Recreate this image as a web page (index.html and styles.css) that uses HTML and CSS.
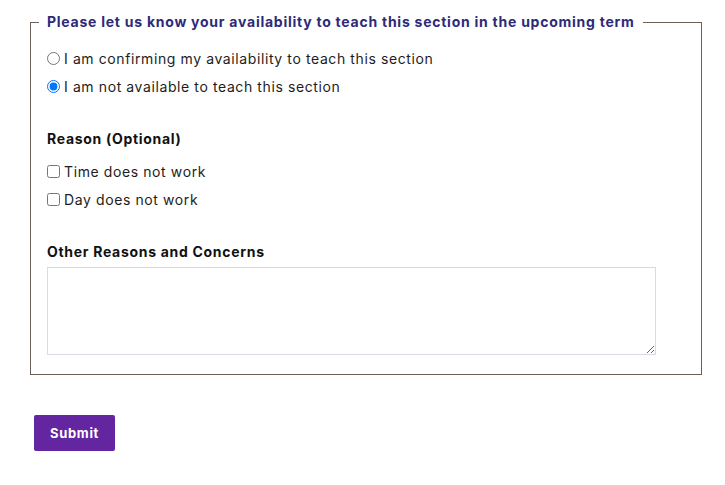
FILE: index.html
```html
<!DOCTYPE html>
<html lang="en">
<head>
    <meta charset="UTF-8">
    <meta name="viewport" content="width=device-width, initial-scale=1.0">
    <title>Section Availability</title>
    <link rel="stylesheet" href="styles.css">
</head>
<body>

<form id="availabilityForm" class="availabilityForm">
    <fieldset class="availabilityBox">
        <legend>Please let us know your availability to teach this section in the upcoming term</legend>

        <div class="optionList">
            <label class="option"><input type="radio" name="availability" value="yes">I am confirming my availability to teach this section</label>
            <label class="option"><input type="radio" name="availability" value="no" checked>I am not available to teach this section</label>
        </div>

        <h2 class="groupTitle">Reason (Optional)</h2>
        <div class="optionList">
            <label class="option"><input type="checkbox" name="reason" value="time">Time does not work</label>
            <label class="option"><input type="checkbox" name="reason" value="day">Day does not work</label>
        </div>

        <h2 class="groupTitle">Other Reasons and Concerns</h2>
        <textarea id="concerns" name="concerns" class="concerns"></textarea>
    </fieldset>

    <button type="submit" class="submitButton">Submit</button>
</form>

</body>
</html>
```

FILE: styles.css
```css
body {
    font-family: Inter, "Noto Sans", Arial, sans-serif;
    font-size: 14px;
    letter-spacing: 0.6px;
    color: #1d1d1d;
    background-color: #fff;
    margin: 0;
}
.availabilityForm {
    padding: 12px 0 0 0;
}
.availabilityBox {
    box-sizing: border-box;
    width: 672px;
    margin: 0 0 0 30px;
    padding: 0 16px 19px 16px;
    border: 1px solid #6b5f57;
    min-width: 0;
}
.availabilityBox legend {
    padding: 0 8px;
    margin-left: -8px;
    line-height: 20px;
    font-weight: 700;
    letter-spacing: 0.75px;
    color: #2e2a7a;
}
.optionList {
    display: flex;
    flex-direction: column;
    padding-top: 12px;
}
.option {
    display: flex;
    align-items: center;
    height: 28px;
}
.option input {
    margin: 0 4px 0 0;
    width: 13px;
    height: 13px;
}
.groupTitle {
    font-size: 14px;
    line-height: 20px;
    font-weight: 700;
    letter-spacing: 0.7px;
    color: #111;
    margin: 29px 0 0 0;
}
.groupTitle + .optionList {
    padding-top: 8px;
}
.concerns {
    display: block;
    box-sizing: border-box;
    width: 609px;
    height: 88px;
    margin-top: 5px;
    border: 1px solid #d9dbe3;
    border-radius: 0;
    resize: vertical;
}
.submitButton {
    display: block;
    margin: 40px 0 0 34px;
    width: 81px;
    height: 36px;
    border: none;
    border-radius: 2px;
    background-color: #6425a0;
    color: #fff;
    font-family: inherit;
    font-size: 13px;
    font-weight: 700;
    letter-spacing: 0.7px;
    cursor: pointer;
}
```
